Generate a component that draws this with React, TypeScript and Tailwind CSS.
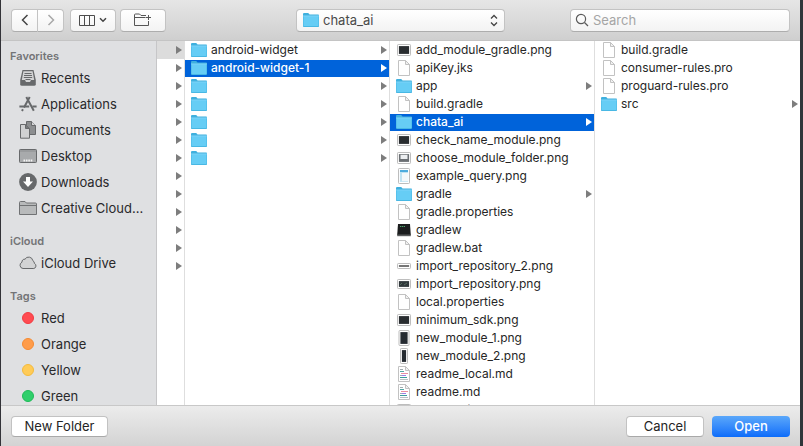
import { useState } from "react";
import type { ReactNode } from "react";

type Kind = "folder" | "doc" | "md" | "terminal" | "wide" | "window" | "page" | "strip" | "short" | "tall" | "slim";
type Entry = { name: string; kind: Kind; open?: boolean };

const projects: Entry[] = [
  { name: "android-widget", kind: "folder" },
  { name: "android-widget-1", kind: "folder", open: true },
  { name: "", kind: "folder" },
  { name: "", kind: "folder" },
  { name: "", kind: "folder" },
  { name: "", kind: "folder" },
  { name: "", kind: "folder" },
];

const files: Entry[] = [
  { name: "add_module_gradle.png", kind: "wide" },
  { name: "apiKey.jks", kind: "doc" },
  { name: "app", kind: "folder" },
  { name: "build.gradle", kind: "doc" },
  { name: "chata_ai", kind: "folder", open: true },
  { name: "check_name_module.png", kind: "wide" },
  { name: "choose_module_folder.png", kind: "window" },
  { name: "example_query.png", kind: "page" },
  { name: "gradle", kind: "folder" },
  { name: "gradle.properties", kind: "doc" },
  { name: "gradlew", kind: "terminal" },
  { name: "gradlew.bat", kind: "doc" },
  { name: "import_repository_2.png", kind: "strip" },
  { name: "import_repository.png", kind: "short" },
  { name: "local.properties", kind: "doc" },
  { name: "minimum_sdk.png", kind: "wide" },
  { name: "new_module_1.png", kind: "tall" },
  { name: "new_module_2.png", kind: "slim" },
  { name: "readme_local.md", kind: "md" },
  { name: "readme.md", kind: "md" },
  { name: "search_hidden_module.png", kind: "wide" },
];

const moduleFiles: Entry[] = [
  { name: "build.gradle", kind: "doc" },
  { name: "consumer-rules.pro", kind: "doc" },
  { name: "proguard-rules.pro", kind: "doc" },
  { name: "src", kind: "folder" },
];

function Folder() {
  return (
    <svg width="16" height="16" viewBox="0 0 16 16" aria-hidden="true">
      <path d="M0 2.2Q0 1 1 1H5.2L6.6 2.5H15.2Q16 2.5 16 3.4V14Q16 15 15.2 15H.8Q0 15 0 14Z" fill="#3fb0de" />
      <path d="M.4 4H15.6V13.4Q15.6 14.2 14.8 14.2H1.2Q.4 14.2 .4 13.4Z" fill="#66cdf5" />
      <path d="M0 3.9H16" stroke="#8fdcfa" strokeWidth=".7" />
    </svg>
  );
}

function Sheet({ lines }: { lines?: boolean }) {
  return (
    <svg width="16" height="16" viewBox="0 0 16 16" aria-hidden="true">
      <path d="M2.5 .5H9.5L13.5 4.5V15.5H2.5Z" fill="#fff" stroke="#c2c2c2" />
      <path d="M9.5 .5V4.5H13.5Z" fill="#f1f1f1" stroke="#c2c2c2" />
      {lines && (
        <g strokeWidth="1">
          <path d="M4 3.5H7" stroke="#a3acb0" />
          <path d="M4 5.5H8" stroke="#52a7a5" />
          <path d="M5 7.5H12" stroke="#ec8fa0" />
          <path d="M4 9.5H6" stroke="#a3acb0" />
          <path d="M6 9.5H10" stroke="#9b7ee8" />
          <path d="M4 11.5H11" stroke="#3e9c9d" />
          <path d="M4 13.5H12" stroke="#b9c0c3" />
        </g>
      )}
    </svg>
  );
}

const thumbs: Record<string, [number, number, string]> = {
  wide: [13, 11, "#292d30"],
  window: [13, 11, "#6b6f73"],
  page: [11, 15, "#bfe3f3"],
  strip: [13, 5, "#686868"],
  short: [13, 9, "#30383b"],
  tall: [10, 15, "#252b31"],
  slim: [7, 15, "#252b31"],
};

function Thumb({ kind }: { kind: Kind }) {
  const [w, h, fill] = thumbs[kind];
  const x = (16 - w) / 2;
  const y = (16 - h) / 2;
  return (
    <svg width="16" height="16" viewBox="0 0 16 16" aria-hidden="true">
      <rect x={x} y={y} width={w} height={h} rx=".8" fill="#fff" stroke="#b5b5b5" strokeWidth=".9" />
      <rect x={x + 1.4} y={y + 1.6} width={w - 2.8} height={h - 3.2} fill={fill} />
      {kind === "window" && <path d="M4.5 4.8H11.5V9H4.5Z" fill="#eceef0" />}
      {kind === "page" && (
        <>
          <path d="M6 5H12V13.2H6Z" fill="#f3f8fa" />
          <path d="M4 3H12" stroke="#2699d6" strokeWidth="1.5" />
        </>
      )}
      {kind === "short" && <path d="M4 9L6 7M8 9L11 7" stroke="#53695d" />}
    </svg>
  );
}

function Terminal() {
  return (
    <svg width="16" height="16" viewBox="0 0 16 16" aria-hidden="true">
      <path d="M2 2H14L14.8 13H1.2Z" fill="#1b1d1e" />
      <path d="M1.2 12.5H14.8V14.2H1.2Z" fill="#5a5c5d" />
      <path d="M4 4.5H9" stroke="#4da36c" strokeDasharray="1.4 .6" />
    </svg>
  );
}

function FileIcon({ kind }: { kind: Kind }) {
  if (kind === "folder") return <Folder />;
  if (kind === "doc") return <Sheet />;
  if (kind === "md") return <Sheet lines />;
  if (kind === "terminal") return <Terminal />;
  return <Thumb kind={kind} />;
}

function Arrow() {
  return (
    <svg width="6" height="8" viewBox="0 0 6 8" className="shrink-0" aria-hidden="true">
      <path d="M0 0L6 4L0 8Z" fill="currentColor" />
    </svg>
  );
}

function Column({ entries, label, divided }: { entries: Entry[]; label: string; divided?: boolean }) {
  return (
    <ul
      aria-label={label}
      className={`min-h-0 min-w-0 overflow-x-hidden overflow-y-auto pt-px [scrollbar-width:none] ${
        divided ? "border-r border-[#dedede]" : ""
      }`}
    >
      {entries.map((e, i) => (
        <li key={i} className="h-[18px]">
          <button
            type="button"
            aria-label={e.name || "Folder"}
            className={`flex h-[17px] w-full items-center pr-0.5 pb-px pl-1.5 text-left ${
              e.open ? "bg-[#0063da] font-medium text-white" : "text-[#262626]"
            }`}
          >
            <span className="mr-1 flex w-4 shrink-0">
              <FileIcon kind={e.kind} />
            </span>
            <span className="min-w-0 flex-1 whitespace-nowrap">{e.name}</span>
            {e.kind === "folder" && (
              <span className={e.open ? "text-white" : "text-[#7d7d7d]"}>
                <Arrow />
              </span>
            )}
          </button>
        </li>
      ))}
    </ul>
  );
}

const places: { name: string; icon: ReactNode }[] = [
  {
    name: "Recents",
    icon: (
      <>
        <path d="M3.5 1H14.5L16.8 11V15.2Q16.8 16.8 15 16.8H3Q1.2 16.8 1.2 15.2V11Z" fill="#67696b" />
        <path d="M4.4 2.2H13.6L15.2 11H12L11 13H7L6 11H2.8Z" fill="#d3d4d5" />
        <path d="M5.5 4.5H12.5M5 6.5H13M4.8 8.5H13.2M6.5 10.5H11.5" stroke="#67696b" />
      </>
    ),
  },
  {
    name: "Applications",
    icon: (
      <>
        <path d="M7.3 2L14.8 15.8M10.7 2L5 12.5M3.9 14.3L3 16" stroke="#67696b" strokeWidth="2" />
        <path d="M.4 11.5H10.2M13.4 11.5H17.6" stroke="#67696b" strokeWidth="2" />
      </>
    ),
  },
  {
    name: "Documents",
    icon: (
      <g stroke="#67696b" strokeWidth="1">
        <path d="M7.5 .5H12.5L16.5 4.5V13.5H7.5Z" fill="#8c8e90" />
        <path d="M12.5 .5V4.5H16.5" fill="#d5d6d7" />
        <path d="M1.5 3.5H6.5L10.5 7.5V17.2H1.5Z" fill="#d0d1d2" />
        <path d="M6.5 3.5V7.5H10.5" fill="#77797b" />
      </g>
    ),
  },
  {
    name: "Desktop",
    icon: (
      <>
        <rect x=".5" y="2.5" width="17" height="13" rx=".8" fill="#a8aaac" stroke="#67696b" />
        <path d="M1 4H17" stroke="#8b8d8f" />
        <path d="M4.5 13.5H14" stroke="#f4f4f4" strokeWidth="2" strokeDasharray="1.6 .8" />
      </>
    ),
  },
  {
    name: "Downloads",
    icon: (
      <>
        <circle cx="9" cy="9" r="8.9" fill="#67696b" />
        <path d="M7 4H11V8.5H14L9 14L4 8.5H7Z" fill="#fff" />
      </>
    ),
  },
  {
    name: "Creative Cloud...",
    icon: (
      <>
        <path d="M.5 3.5Q.5 2.5 1.5 2.5H6L7.4 4H16.5Q17.5 4 17.5 5V15.5H.5Z" fill="#b8babb" stroke="#707274" />
        <path d="M1 6.5H17" stroke="#707274" />
      </>
    ),
  },
];

const tags = [
  { name: "Red", dot: "bg-[#ff4b51] border-[#f23b42]" },
  { name: "Orange", dot: "bg-[#ff9c4a] border-[#f58a32]" },
  { name: "Yellow", dot: "bg-[#ffcb57] border-[#f3ba3d]" },
  { name: "Green", dot: "bg-[#30cf6b] border-[#1fba58]" },
];

function Place({ children, name }: { children: ReactNode; name: string }) {
  return (
    <li>
      <button type="button" className="flex h-[26px] w-full items-center gap-1 pl-[18px] text-left whitespace-nowrap">
        <span className="flex w-[18px] shrink-0 justify-center">{children}</span>
        {name}
      </button>
    </li>
  );
}

function Heading({ children }: { children: string }) {
  return <h2 className="mb-px pl-[9px] text-[11px] leading-4 font-semibold text-[#737476]">{children}</h2>;
}

const control =
  "flex h-[23px] items-center rounded border border-[#c3c3c3] border-b-[#adadad] bg-linear-to-b from-white to-[#f3f3f3] text-[#4a4a4a]";

export default function App() {
  const [query, setQuery] = useState("");
  return (
    <div className="flex h-screen flex-col overflow-hidden border-r-[3px] border-l border-r-[#30363a] border-l-[#333338] bg-white font-['Inter',sans-serif] text-[12px] leading-4">
      <header className="grid h-[41px] shrink-0 grid-cols-[1fr_auto_1fr] items-center border-b border-[#c4c4c4] bg-linear-to-b from-[#e6e6e6] to-[#cfcfcf] px-2.5">
        <div className="flex">
          <div className="flex">
            <button type="button" aria-label="Back" className={`${control} w-[27px] justify-center rounded-r-none`}>
              <svg width="8" height="12" viewBox="0 0 8 12" fill="none" aria-hidden="true">
                <path d="M6.5 1L1.5 6L6.5 11" stroke="#444" strokeWidth="1.5" />
              </svg>
            </button>
            <button type="button" aria-label="Forward" className={`${control} w-[26px] justify-center rounded-l-none border-l-0`}>
              <svg width="8" height="12" viewBox="0 0 8 12" fill="none" aria-hidden="true">
                <path d="M1.5 1L6.5 6L1.5 11" stroke="#a8a8a8" strokeWidth="1.5" />
              </svg>
            </button>
          </div>
          <button type="button" aria-label="View as columns" className={`${control} ml-1.5 w-[46px] justify-center gap-1`}>
            <svg width="16" height="11" viewBox="0 0 16 11" fill="none" stroke="#4c4c4c" aria-hidden="true">
              <path d="M.5 .5H15.5V10.5H.5ZM5.5 .5V10.5M10.5 .5V10.5" />
            </svg>
            <svg width="8" height="6" viewBox="0 0 8 6" fill="none" aria-hidden="true">
              <path d="M1 1.2L4 4.2L7 1.2" stroke="#444" strokeWidth="1.5" />
            </svg>
          </button>
          <button type="button" aria-label="New folder" className={`${control} ml-1 w-[46px] justify-center`}>
            <svg width="18" height="14" viewBox="0 0 18 14" fill="none" stroke="#555" aria-hidden="true">
              <path d="M12 2.5H7L5.5 1H1.5Q.5 1 .5 2V12.5H14.5V8M.5 4.5H11.5M12 4.5H17M14.5 2V7" />
            </svg>
          </button>
        </div>
        <button type="button" aria-haspopup="listbox" className={`${control} w-[209px] gap-1 px-1.5 text-left text-[13px]`}>
          <Folder />
          <span className="flex-1">chata_ai</span>
          <svg width="8" height="13" viewBox="0 0 8 13" fill="none" aria-hidden="true">
            <path d="M1 4.5L4 1.5L7 4.5M1 8.5L4 11.5L7 8.5" stroke="#444" strokeWidth="1.3" />
          </svg>
        </button>
        <label className={`${control} w-[220px] gap-1 justify-self-end px-1`}>
          <svg width="14" height="14" viewBox="0 0 14 14" fill="none" stroke="#5b5b5b" strokeWidth="1.2" aria-hidden="true">
            <circle cx="6" cy="6" r="4.6" />
            <path d="M9.5 9.5L13 13" />
          </svg>
          <input
            aria-label="Search"
            placeholder="Search"
            value={query}
            onChange={(e) => setQuery(e.target.value)}
            className="min-w-0 flex-1 bg-transparent text-[13px] outline-none placeholder:text-[#a5a5a5]"
          />
        </label>
      </header>

      <main className="flex min-h-0 flex-1">
        <nav
          aria-label="Places"
          className="w-[156px] shrink-0 overflow-hidden border-r border-[#c6c6c8] bg-[#dfe0e2] pt-[7px] text-[13px] text-[#29292b]"
        >
          <Heading>Favorites</Heading>
          <ul className="mb-3">
            {places.map((p) => (
              <Place key={p.name} name={p.name}>
                <svg width="18" height="18" viewBox="0 0 18 18" fill="none" aria-hidden="true">
                  {p.icon}
                </svg>
              </Place>
            ))}
          </ul>
          <Heading>iCloud</Heading>
          <ul className="mb-3">
            <Place name="iCloud Drive">
              <svg width="18" height="18" viewBox="0 0 18 18" aria-hidden="true">
                <path
                  d="M4 14.5A3.3 3.3 0 0 1 3 8.2A2.6 2.6 0 0 1 6 5.2A4.2 4.2 0 0 1 13.8 6.6A3 3 0 0 1 15.4 9.4A2.7 2.7 0 0 1 14.8 14.5Z"
                  fill="#d2d3d4"
                  stroke="#67696b"
                />
              </svg>
            </Place>
          </ul>
          <Heading>Tags</Heading>
          <ul>
            {tags.map((t) => (
              <Place key={t.name} name={t.name}>
                <span className={`size-3 rounded-full border ${t.dot}`} />
              </Place>
            ))}
          </ul>
        </nav>

        <ul aria-label="Parent folders" className="w-7 shrink-0 overflow-hidden border-r border-[#dedede] text-[#7d7d7d]">
          {Array.from({ length: 13 }, (_, i) => (
            <li key={i} className={`flex h-[18px] items-center justify-end pr-0.5 ${i === 0 ? "bg-[#dcdcdc]" : ""}`}>
              <Arrow />
            </li>
          ))}
        </ul>
        <div className="grid min-h-0 min-w-0 flex-1 grid-cols-3 grid-rows-1">
          <Column label="Projects" entries={projects} divided />
          <Column label="android-widget-1" entries={files} divided />
          <Column label="chata_ai" entries={moduleFiles} />
        </div>
      </main>

      <footer className="flex h-[41px] shrink-0 items-center gap-2 border-t border-[#c8c8c8] bg-linear-to-b from-[#ececec] to-[#d3d3d3] px-2.5 text-[13px] text-[#242424]">
        <button type="button" className="h-[21px] w-[97px] rounded border border-[#c2c2c2] border-b-[#a9a9a9] bg-white">
          New Folder
        </button>
        <button type="button" className="ml-auto h-[21px] w-[78px] rounded border border-[#c2c2c2] border-b-[#a9a9a9] bg-white">
          Cancel
        </button>
        <button type="button" className="h-[21px] w-[78px] rounded bg-linear-to-b from-[#5aa7fa] to-[#0a6cfa] font-medium text-white">
          Open
        </button>
      </footer>
    </div>
  );
}
